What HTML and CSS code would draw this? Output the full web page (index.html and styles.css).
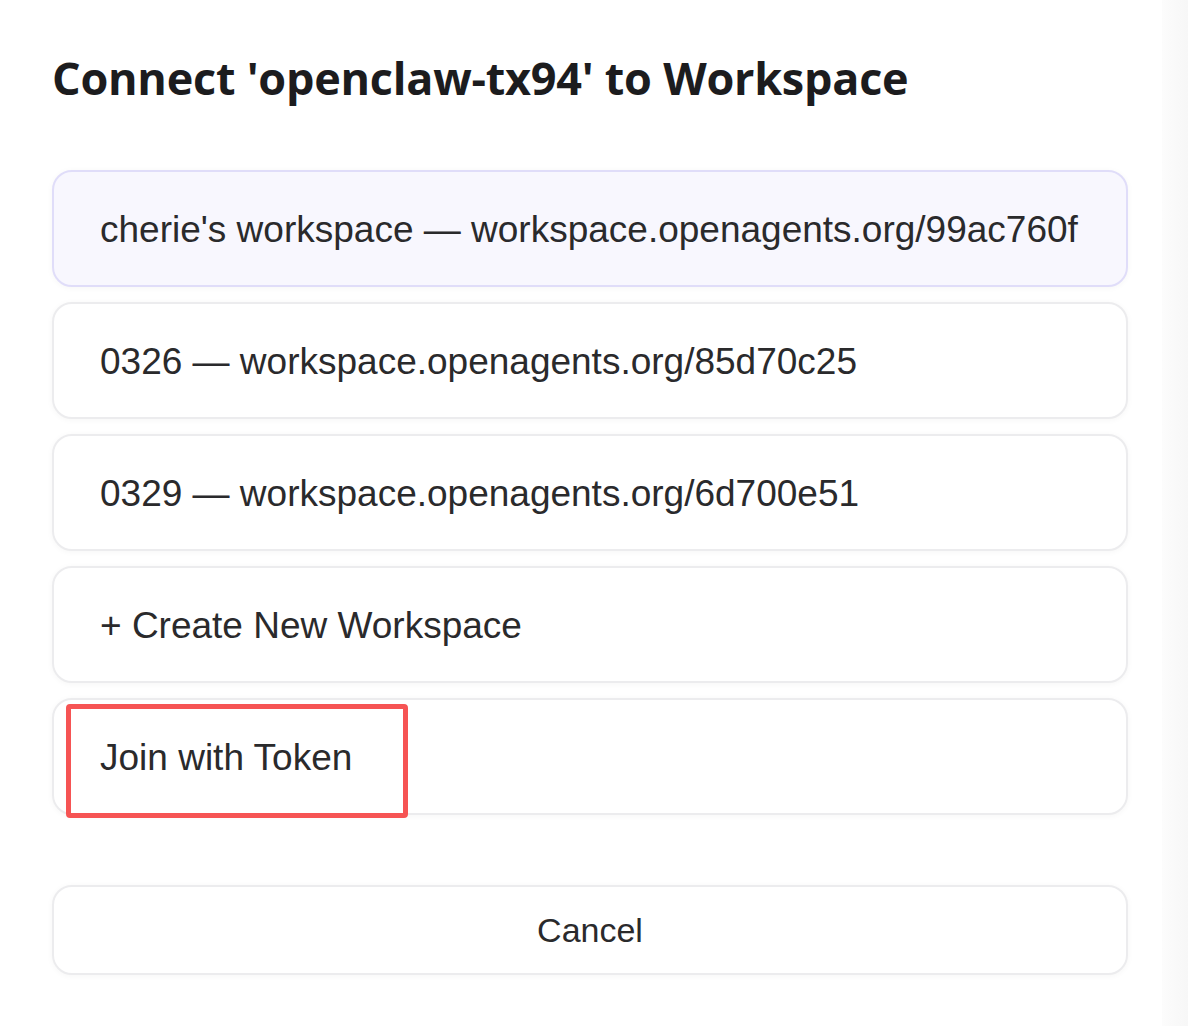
FILE: index.html
```html
<!DOCTYPE html>
<html lang="en">
<head>
<meta charset="utf-8">
<title>Connect to Workspace</title>
<link rel="stylesheet" href="styles.css">
</head>
<body>
<div class="page">
  <section class="dialog">
    <h1 class="dialog-title">Connect 'openclaw-tx94' to Workspace</h1>
    <div class="options">
      <button class="option option-selected">cherie's workspace — workspace.openagents.org/99ac760f</button>
      <button class="option">0326 — workspace.openagents.org/85d70c25</button>
      <button class="option">0329 — workspace.openagents.org/6d700e51</button>
      <button class="option">+ Create New Workspace</button>
      <button class="option option-token">Join with Token</button>
    </div>
    <button class="cancel">Cancel</button>
  </section>
  <div class="edge"></div>
</div>
</body>
</html>
```

FILE: styles.css
```css
html, body {
  margin: 0;
  padding: 0;
  background: #ffffff;
}

.page {
  display: flex;
  width: 1188px;
  height: 1026px;
  overflow: hidden;
}

.dialog {
  flex: 0 0 1162px;
  box-sizing: border-box;
  padding: 50px 34px 0 52px;
}

.dialog-title {
  margin: 0 0 64px 0;
  font-family: "Open Sans", "Noto Sans", sans-serif;
  font-weight: 700;
  font-size: 45px;
  line-height: 56px;
  color: #1c1c1e;
  letter-spacing: -0.25px;
}

.options {
  display: flex;
  flex-direction: column;
  gap: 15px;
  width: 1076px;
}

.option {
  position: relative;
  display: flex;
  align-items: center;
  height: 117px;
  box-sizing: border-box;
  padding: 3px 0 0 46px;
  border: 2px solid #ececee;
  border-radius: 20px;
  background: #ffffff;
  box-shadow: 0 1px 6px rgba(0, 0, 0, 0.04);
  font-family: "Liberation Sans", Arial, sans-serif;
  font-size: 37px;
  color: #2a2a2c;
  text-align: left;
  cursor: pointer;
}

.option-selected {
  background: #f8f7fe;
  border-color: #e0ddf9;
}

/* red annotation frame drawn over the token option */
.option-token::after {
  content: "";
  position: absolute;
  left: 12px;
  top: 4px;
  width: 342px;
  height: 114px;
  box-sizing: border-box;
  border: 5px solid #f65454;
  border-radius: 4px;
}

.cancel {
  display: block;
  width: 1076px;
  height: 90px;
  margin-top: 70px;
  box-sizing: border-box;
  padding-top: 2px;
  border: 2px solid #ececee;
  border-radius: 20px;
  background: #ffffff;
  box-shadow: 0 1px 6px rgba(0, 0, 0, 0.04);
  font-family: "Liberation Sans", Arial, sans-serif;
  font-size: 34px;
  color: #2a2a2c;
  cursor: pointer;
}

.edge {
  flex: 1 1 auto;
  background: linear-gradient(to right, #fcfcfc, #f7f7f7);
}
```
